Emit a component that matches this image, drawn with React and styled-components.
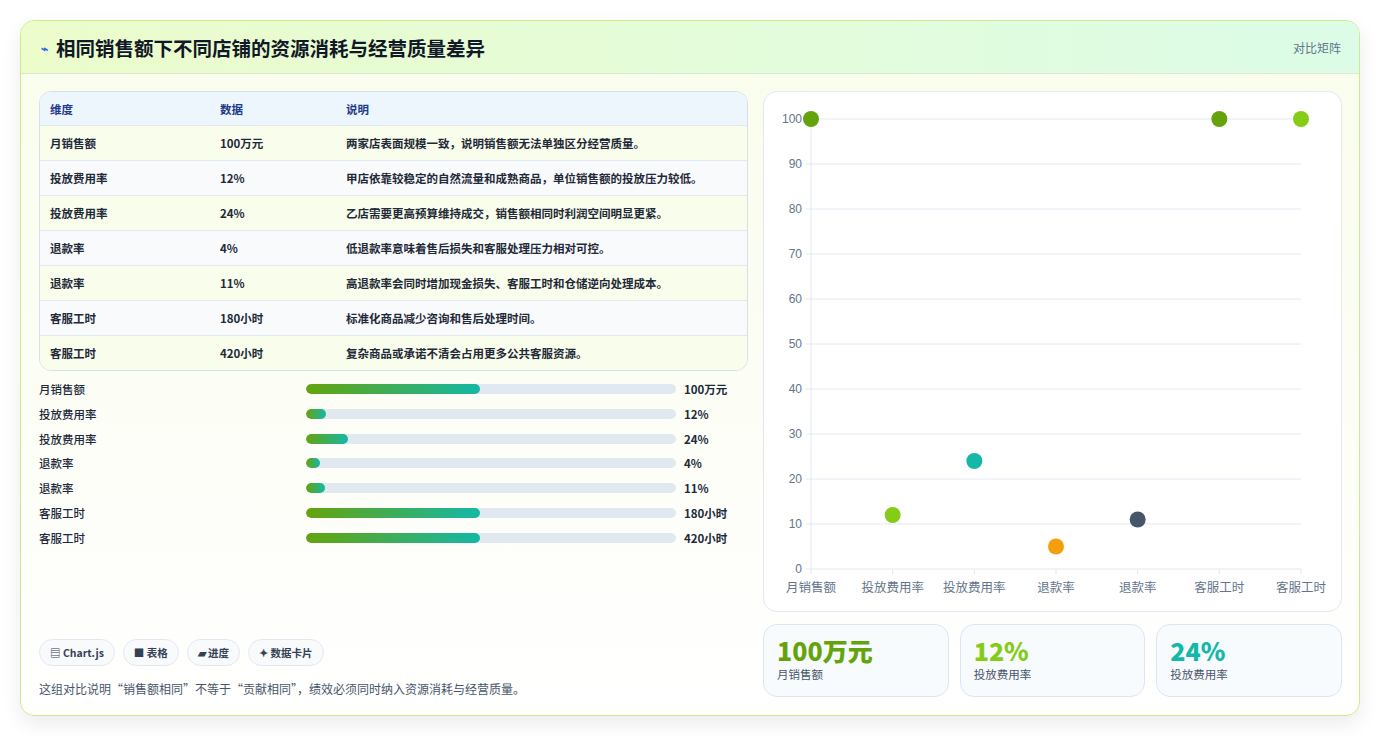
import React from "react";
import styled, { createGlobalStyle } from "styled-components";

const G = createGlobalStyle`
  body{margin:0;background:#fff;font-family:"Noto Sans CJK SC","Noto Sans",sans-serif;color:#1e293b;}
`;
const Page = styled.div`padding:20px 21px 20px 20px;`;
const Card = styled.div`
  border:1px solid #cdeb8b;border-radius:14px;overflow:hidden;height:696px;box-sizing:border-box;
  background:linear-gradient(180deg,#f9fdeb 0%,#ffffff 100%);
  box-shadow:0 8px 20px rgba(0,0,0,0.08);display:flex;flex-direction:column;`;
const Header = styled.div`
  height:55px;box-sizing:border-box;display:flex;align-items:center;justify-content:space-between;
  padding:0 18px 0 20px;background:linear-gradient(90deg,#ecfccb,#dcfce7);border-bottom:1px solid #dbe7d0;`;
const Title = styled.h1`margin:0;font-size:19.5px;font-weight:700;color:#111827;display:flex;align-items:center;gap:8px;`;
const Tag = styled.span`font-size:12px;color:#64748b;`;
const Body = styled.div`flex:1;display:grid;grid-template-columns:709px 579px;gap:15px;padding:17px 18px 18px 18px;`;
const Left = styled.div`display:flex;flex-direction:column;`;
const Table = styled.div`border:1px solid #d6e0ea;border-radius:12px;overflow:hidden;`;
const Row = styled.div`
  display:grid;grid-template-columns:170px 126px 1fr;height:${p=>p.h||35}px;box-sizing:border-box;align-items:center;
  padding-left:10px;font-size:11.5px;font-weight:${p=>p.head?700:600};
  color:${p=>p.head?"#1e3a8a":"#1f2937"};
  background:${p=>p.head?"#eef6fd":p.alt?"#f8fafc":"#f8fdec"};
  border-top:${p=>p.first?"none":"1px solid #e2e8f0"};`;
const Bars = styled.div`display:flex;flex-direction:column;gap:6.8px;margin-top:9px;`;
const BarRow = styled.div`display:grid;grid-template-columns:267px 370px 1fr;align-items:center;height:18px;font-size:11.5px;font-weight:500;`;
const Track = styled.div`height:10px;border-radius:5px;background:#e2e8f0;overflow:hidden;`;
const Fill = styled.div`height:100%;border-radius:5px;background:linear-gradient(90deg,#65a30d,#14b8a6);`;
const Val = styled.span`padding-left:8px;font-weight:700;`;
const Foot = styled.div`margin-top:auto;`;
const Chips = styled.div`display:flex;gap:8px;`;
const Chip = styled.span`font-size:10.5px;font-weight:700;color:#334155;border:1px solid #e2e8f0;background:#f8fafc;border-radius:14px;padding:5px 10px;`;
const Note = styled.p`margin:14px 0 0;font-size:12px;color:#475569;`;
const Right = styled.div`display:flex;flex-direction:column;gap:12px;`;
const ChartBox = styled.div`height:519px;border:1px solid #e2e8f0;border-radius:14px;background:#fff;`;
const Stats = styled.div`display:grid;grid-template-columns:repeat(3,1fr);gap:11px;`;
const Stat = styled.div`height:73px;box-sizing:border-box;border:1px solid #dbe6f2;border-radius:14px;background:#f8fbfe;padding:9px 13px;`;
const Big = styled.div`font-size:25px;font-weight:800;color:${p=>p.c};line-height:32px;`;
const Small = styled.div`font-size:11.5px;color:#475569;margin-top:0;`;

const rows=[["月销售额","100万元","两家店表面规模一致，说明销售额无法单独区分经营质量。"],["投放费用率","12%","甲店依靠较稳定的自然流量和成熟商品，单位销售额的投放压力较低。"],["投放费用率","24%","乙店需要更高预算维持成交，销售额相同时利润空间明显更紧。"],["退款率","4%","低退款率意味着售后损失和客服处理压力相对可控。"],["退款率","11%","高退款率会同时增加现金损失、客服工时和仓储逆向处理成本。"],["客服工时","180小时","标准化商品减少咨询和售后处理时间。"],["客服工时","420小时","复杂商品或承诺不清会占用更多公共客服资源。"]];
const pct=[47,5.5,11.3,3.8,5.2,47,47];
const pts=[[100,"#65a30d"],[12,"#84cc16"],[24,"#14b8a6"],[5,"#f59e0b"],[11,"#475569"],[100,"#65a30d"],[100,"#84cc16"]];

function Chart(){
  const x0=47,x1=537,yTop=27,yBot=477;
  const ys=[0,10,20,30,40,50,60,70,80,90,100];
  const Y=v=>yBot-(v/100)*(yBot-yTop);
  const X=i=>x0+i*(x1-x0)/6;
  return <svg width="577" height="517">
    {ys.map(v=><g key={v}><line x1={x0-5} x2={x1} y1={Y(v)} y2={Y(v)} stroke="#e2e8f0"/>
      <text x={x0-9} y={Y(v)+4} textAnchor="end" fontSize="12" fill="#64748b" fontFamily="Liberation Sans,sans-serif">{v}</text></g>)}
    <line x1={x0} x2={x0} y1={yTop} y2={yBot} stroke="#e2e8f0"/>
    {rows.map((r,i)=><g key={i}><line x1={X(i)} x2={X(i)} y1={yBot} y2={yBot+5} stroke="#e2e8f0"/>
      <text x={X(i)} y={yBot+23} textAnchor="middle" fontSize="12.5" fill="#64748b">{r[0]}</text></g>)}
    {pts.map((p,i)=><circle key={i} cx={X(i)} cy={Y(p[0])} r="8" fill={p[1]}/>)}
  </svg>;
}

export default function App(){
  return <><G/><Page><Card>
    <Header><Title><span style={{fontSize:12,color:"#2563eb"}}>⌁</span>相同销售额下不同店铺的资源消耗与经营质量差异</Title><Tag>对比矩阵</Tag></Header>
    <Body>
      <Left>
        <Table>
          <Row head first h={33}><span>维度</span><span>数据</span><span>说明</span></Row>
          {rows.map((r,i)=><Row key={i} alt={i%2===1}><span>{r[0]}</span><span>{r[1]}</span><span>{r[2]}</span></Row>)}
        </Table>
        <Bars>
          {rows.map((r,i)=><BarRow key={i}><span>{r[0]}</span><Track><Fill style={{width:pct[i]+"%"}}/></Track><Val>{r[1]}</Val></BarRow>)}
        </Bars>
        <Foot>
          <Chips><Chip>▤ Chart.js</Chip><Chip>■ 表格</Chip><Chip>▰ 进度</Chip><Chip>✦ 数据卡片</Chip></Chips>
          <Note>这组对比说明“销售额相同”不等于“贡献相同”，绩效必须同时纳入资源消耗与经营质量。</Note>
        </Foot>
      </Left>
      <Right>
        <ChartBox><Chart/></ChartBox>
        <Stats>
          <Stat><Big c="#65a30d">100万元</Big><Small>月销售额</Small></Stat>
          <Stat><Big c="#84cc16">12%</Big><Small>投放费用率</Small></Stat>
          <Stat><Big c="#14b8a6">24%</Big><Small>投放费用率</Small></Stat>
        </Stats>
      </Right>
    </Body>
  </Card></Page></>;
}
